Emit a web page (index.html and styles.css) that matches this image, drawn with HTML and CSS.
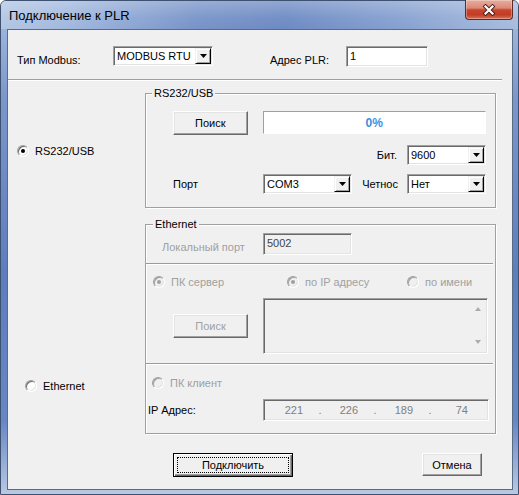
FILE: index.html
```html
<!DOCTYPE html>
<html lang="ru">
<head>
<meta charset="utf-8">
<title>Подключение к PLR</title>
<link rel="stylesheet" href="styles.css">
</head>
<body>
<div class="window">
  <div class="titlebar">
    <span class="title">Подключение к PLR</span>
    <div class="close">
      <svg width="14" height="12" viewBox="0 0 14 12"><path d="M3.5 2.5 L10.5 9.5 M10.5 2.5 L3.5 9.5" stroke="#4a1f17" stroke-width="4" stroke-linecap="square" fill="none"/><path d="M3.5 2.5 L10.5 9.5 M10.5 2.5 L3.5 9.5" stroke="#ffffff" stroke-width="2.2" stroke-linecap="square" fill="none"/></svg>
    </div>
  </div>
  <div class="client">
    <div class="toprow">
      <span class="lbl lbl-modbus">Тип Modbus:</span>
      <div class="combo combo-modbus"><span class="combo-text">MODBUS RTU</span><span class="drop"><svg width="7" height="4" viewBox="0 0 7 4"><polygon points="0,0 7,0 3.5,4" fill="#000"/></svg></span></div>
      <span class="lbl lbl-addr">Адрес PLR:</span>
      <div class="edit edit-addr">1</div>
    </div>
    <div class="sep"></div>
    <div class="main">
      <div class="radio-item rad-rs"><span class="radio checked"></span><span>RS232/USB</span></div>
      <div class="group group-rs">
        <span class="legend">RS232/USB</span>
        <div class="rs-row1">
          <div class="btn btn-search">Поиск</div>
          <div class="progress">0%</div>
        </div>
        <div class="rs-row2">
          <span class="lbl lbl-bit">Бит.</span>
          <div class="combo combo-sm"><span class="combo-text">9600</span><span class="drop"><svg width="7" height="4" viewBox="0 0 7 4"><polygon points="0,0 7,0 3.5,4" fill="#000"/></svg></span></div>
        </div>
        <div class="rs-row3">
          <span class="lbl lbl-port">Порт</span>
          <div class="combo combo-com"><span class="combo-text">COM3</span><span class="drop"><svg width="7" height="4" viewBox="0 0 7 4"><polygon points="0,0 7,0 3.5,4" fill="#000"/></svg></span></div>
          <span class="lbl lbl-parity">Четнос</span>
          <div class="combo combo-sm"><span class="combo-text">Нет</span><span class="drop"><svg width="7" height="4" viewBox="0 0 7 4"><polygon points="0,0 7,0 3.5,4" fill="#000"/></svg></span></div>
        </div>
      </div>
      <div class="radio-item rad-eth"><span class="radio"></span><span>Ethernet</span></div>
      <div class="group group-eth">
        <span class="legend legend-eth">Ethernet</span>
        <div class="eth-a">
          <span class="lbl dis lbl-local">Локальный порт</span>
          <div class="edit edit-dis edit-port">5002</div>
        </div>
        <div class="divider"></div>
        <div class="eth-b">
          <div class="srv-row">
            <div class="radio-item dis w-srv"><span class="radio radio-dis checked"></span><span>ПК сервер</span></div>
            <div class="radio-item dis w-ip"><span class="radio radio-dis checked"></span><span>по IP адресу</span></div>
            <div class="radio-item dis"><span class="radio radio-dis"></span><span>по имени</span></div>
          </div>
          <div class="srv-panel">
            <div class="btn btn-search dis">Поиск</div>
            <div class="textarea">
              <div class="sb"><span class="arr-up"></span><span class="arr-down"></span></div>
            </div>
          </div>
        </div>
        <div class="divider"></div>
        <div class="eth-c">
          <div class="cli-row">
            <div class="radio-item dis"><span class="radio radio-dis"></span><span>ПК клиент</span></div>
          </div>
          <div class="ip-row">
            <span class="lbl lbl-ip">IP Адрес:</span>
            <div class="ipfield">
              <span class="oct">221</span><span class="dot">.</span>
              <span class="oct">226</span><span class="dot">.</span>
              <span class="oct">189</span><span class="dot">.</span>
              <span class="oct">74</span>
            </div>
          </div>
        </div>
      </div>
    </div>
    <div class="buttons">
      <div class="btn btn-default"><span class="focus">Подключить</span></div>
      <div class="btn btn-cancel">Отмена</div>
    </div>
  </div>
</div>
</body>
</html>
```

FILE: styles.css
```css
* { box-sizing: border-box; }
html, body { margin: 0; padding: 0; }
body {
  width: 519px;
  height: 495px;
  overflow: hidden;
  background: #ffffff;
  font-family: "Liberation Sans", Arial, sans-serif;
  font-size: 11px;
  color: #000;
}

.window {
  position: relative;
  width: 519px;
  height: 495px;
  display: flex;
  flex-direction: column;
  border: 1px solid #3f5170;
  border-radius: 6px 6px 0 0;
  background: linear-gradient(180deg, #a9bfe1 0%, #7a97cb 20%, #5d7dbd 55%, #6686c4 85%, #b9c9e3 100%);
}

.titlebar {
  height: 28px;
  flex: none;
  display: flex;
  align-items: center;
  padding-left: 8px;
  border-radius: 5px 5px 0 0;
  background:
    linear-gradient(180deg, rgba(255,255,255,0.25) 0%, rgba(255,255,255,0.05) 60%, rgba(255,255,255,0) 100%),
    linear-gradient(90deg, #b3c6e3 0%, #a0b7dd 14%, #7793c8 38%, #6d8ac3 55%, #839ecf 75%, #a8bcde 100%);
}
.title {
  font-size: 13px;
  color: #000;
  padding-top: 1px;
}
.close {
  position: absolute;
  top: -1px;
  right: 5px;
  width: 48px;
  height: 20px;
  border: 1px solid #5e2c23;
  border-top: none;
  border-radius: 0 0 4px 4px;
  background: linear-gradient(180deg, #e7ad9f 0%, #da8a77 42%, #c8452e 52%, #c23c26 78%, #d8745b 100%);
  box-shadow: inset 0 0 0 1px rgba(255,255,255,0.3);
  display: flex;
  align-items: center;
  justify-content: center;
}

.client {
  flex: 1;
  margin: 0 5px 4px 6px;
  border: 1px solid #5a6b86;
  background: #f0f0f0;
  display: flex;
  flex-direction: column;
}

.lbl { line-height: 13px; white-space: nowrap; }
.dis { color: #a0a0a0; }

.toprow {
  height: 49px;
  flex: none;
  display: flex;
  align-items: flex-start;
  padding: 16px 0 0 9px;
}
.lbl-modbus { width: 96px; margin-top: 8px; }
.lbl-addr { width: 76px; margin-left: 57px; margin-top: 8px; }

.sep {
  flex: none;
  height: 2px;
  margin-right: 10px;
  border-top: 1px solid #a0a0a0;
  border-bottom: 1px solid #ffffff;
}

/* sunken controls */
.combo, .edit, .progress, .textarea, .ipfield {
  border: 1px solid;
  border-color: #a0a0a0 #ffffff #ffffff #a0a0a0;
  box-shadow: inset 1px 1px 0 #696969, inset -1px -1px 0 #e3e3e3;
}
.combo {
  height: 20px;
  display: flex;
  align-items: center;
  background: #fff;
  padding: 1px;
}
.combo-text {
  flex: 1;
  padding-left: 2px;
  line-height: 16px;
  white-space: nowrap;
}
.drop {
  width: 16px;
  height: 16px;
  flex: none;
  display: flex;
  align-items: center;
  justify-content: center;
  background: #f0f0f0;
  border: 1px solid;
  border-color: #f0f0f0 #000000 #000000 #f0f0f0;
  box-shadow: inset 1px 1px 0 #ffffff, inset -1px -1px 0 #a0a0a0;
}
.combo-modbus { width: 100px; }
.combo-sm { width: 79px; }
.combo-com { width: 89px; }

.edit {
  background: #fff;
  padding: 2px 3px;
  line-height: 15px;
}
.edit-addr { width: 82px; height: 21px; }
.edit-dis { background: #f0f0f0; color: #444; }

/* raised buttons */
.btn {
  display: flex;
  align-items: center;
  justify-content: center;
  background: #f0f0f0;
  border: 1px solid;
  border-color: #ffffff #696969 #696969 #ffffff;
  box-shadow: inset -1px -1px 0 #a0a0a0, inset 1px 1px 0 #e3e3e3;
  white-space: nowrap;
}

.main {
  display: grid;
  grid-template-columns: 137px 351px;
  row-gap: 16px;
  padding-top: 12px;
}

.radio-item {
  display: flex;
  align-items: center;
  height: 14px;
  gap: 6px;
  white-space: nowrap;
}
.radio {
  position: relative;
  flex: none;
  width: 12px;
  height: 12px;
  border-radius: 50%;
  background: #fff;
  border: 1px solid;
  border-color: #a0a0a0 #ffffff #ffffff #a0a0a0;
  box-shadow: inset 1px 1px 0 #696969, inset -1px -1px 0 #e3e3e3;
}
.radio.checked::after {
  content: "";
  position: absolute;
  left: 3px;
  top: 3px;
  width: 4px;
  height: 4px;
  border-radius: 50%;
  background: #000;
}
.radio-dis { background: #f0f0f0; box-shadow: inset 1px 1px 0 #a0a0a0, inset -1px -1px 0 #e3e3e3; }
.radio-dis.checked::after { background: #a0a0a0; }

.rad-rs { align-self: center; padding-left: 9px; }
.rad-eth { align-self: start; margin-top: 155px; padding-left: 17px; }

.group {
  position: relative;
  border: 1px solid #a0a0a0;
  box-shadow: inset 1px 1px 0 #ffffff, 1px 1px 0 #ffffff;
}
.legend {
  position: absolute;
  top: -7px;
  left: 6px;
  padding: 0 2px;
  line-height: 13px;
  background: #f0f0f0;
}
.legend-eth { left: 7px; }

.group-rs {
  height: 115px;
  display: flex;
  flex-direction: column;
  padding: 17px 9px 0 27px;
}
.rs-row1 { display: flex; }
.btn-search { width: 75px; height: 24px; }
.progress {
  width: 225px;
  height: 23px;
  margin-left: 15px;
  background: #fff;
  box-shadow: none;
  display: flex;
  align-items: center;
  justify-content: center;
  font-size: 12px;
  font-weight: bold;
  color: #3a8fe6;
}
.rs-row2 {
  display: flex;
  justify-content: flex-end;
  align-items: center;
  margin-top: 10px;
}
.lbl-bit { margin-right: 10px; }
.rs-row3 {
  display: flex;
  align-items: center;
  margin-top: 9px;
}
.lbl-port { width: 90px; }
.lbl-parity { flex: 1; text-align: right; padding-right: 9px; }

.group-eth {
  height: 210px;
  display: flex;
  flex-direction: column;
}
.eth-a {
  height: 38px;
  flex: none;
  display: flex;
  align-items: flex-start;
  padding: 8px 0 0 16px;
}
.lbl-local { width: 101px; margin-top: 8px; }
.edit-port { width: 89px; height: 22px; }

.divider {
  flex: none;
  height: 2px;
  margin-right: 2px;
  border-top: 1px solid #9a9a9a;
  border-bottom: 1px solid #ffffff;
}

.eth-b { padding: 10px 0 9px 7px; }
.srv-row { display: flex; align-items: center; height: 14px; }
.w-srv { width: 134px; }
.w-ip { width: 120px; }
.srv-panel {
  display: flex;
  align-items: center;
  margin-top: 9px;
  padding-left: 20px;
}
.textarea {
  width: 225px;
  height: 56px;
  margin-left: 15px;
  background: #f0f0f0;
  display: flex;
  justify-content: flex-end;
  padding: 1px;
}
.sb {
  width: 16px;
  display: flex;
  flex-direction: column;
  justify-content: space-between;
  align-items: center;
  padding: 7px 0 8px;
}
.arr-up, .arr-down {
  width: 0;
  height: 0;
  border-left: 3.5px solid transparent;
  border-right: 3.5px solid transparent;
}
.arr-up { border-bottom: 4px solid #ababab; }
.arr-down { border-top: 4px solid #ababab; }

.eth-c { padding-top: 11px; }
.cli-row { padding-left: 6px; display: flex; }
.ip-row {
  display: flex;
  align-items: center;
  margin-top: 9px;
  padding-left: 2px;
}
.lbl-ip { width: 115px; }
.ipfield {
  width: 226px;
  height: 22px;
  background: #f0f0f0;
  color: #808080;
  display: grid;
  grid-template-columns: 38px 34px 21px 34px 21px 34px 21px;
  align-items: center;
  padding: 1px;
  line-height: 13px;
}
.oct { text-align: right; }
.dot { text-align: center; }

.buttons {
  display: flex;
  align-items: flex-start;
  margin-top: 19px;
  padding-left: 165px;
}
.btn-default {
  width: 120px;
  height: 24px;
  border: 1px solid #000;
  box-shadow: inset 1px 1px 0 #ffffff, inset -1px -1px 0 #696969, inset -2px -2px 0 #a0a0a0;
  padding: 3px;
}
.focus {
  flex: 1;
  align-self: stretch;
  display: flex;
  align-items: center;
  justify-content: center;
  border: 1px dotted #000;
}
.btn-cancel { width: 60px; height: 23px; margin-left: 129px; }
```
